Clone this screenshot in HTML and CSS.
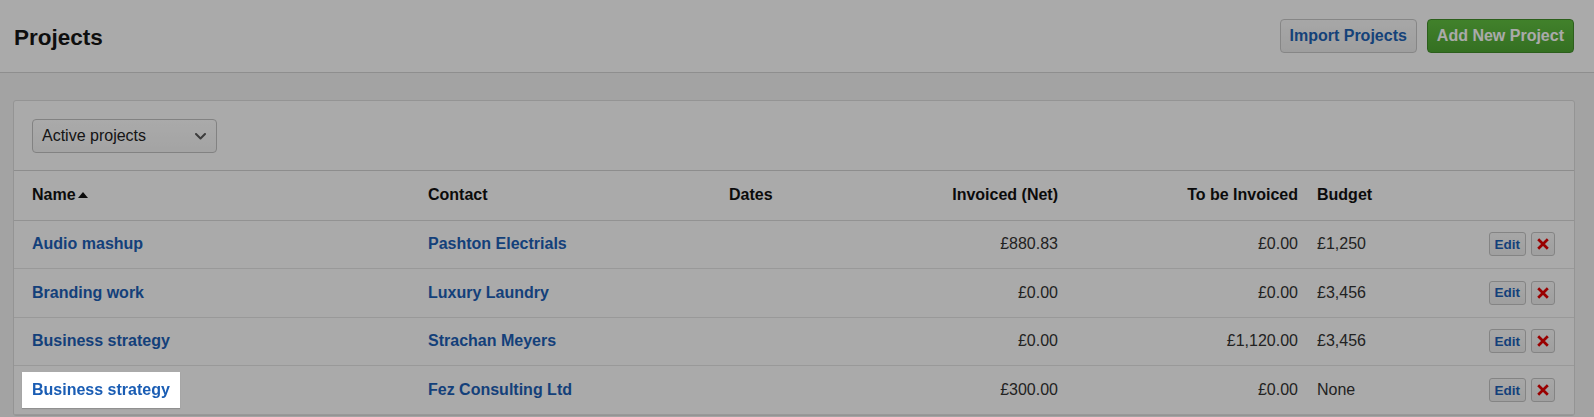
FILE: index.html
```html
<!DOCTYPE html>
<html lang="en">
<head>
<meta charset="utf-8">
<title>Projects</title>
<link rel="stylesheet" href="styles.css">
</head>
<body>
<header class="page-header">
  <h1 class="page-title">Projects</h1>
  <div class="header-actions">
    <a class="btn btn-default" href="#">Import Projects</a>
    <a class="btn btn-primary" href="#">Add New Project</a>
  </div>
</header>
<main class="main">
  <section class="card">
    <div class="filter-bar">
      <div class="select">
        <span>Active projects</span>
        <svg class="chevron" width="11" height="7" viewBox="0 0 11 7"><path d="M1 1 L5.5 5.5 L10 1" fill="none" stroke="#5a5a5a" stroke-width="2" stroke-linecap="round" stroke-linejoin="round"/></svg>
      </div>
    </div>
    <div class="grid">
      <div class="row head">
        <div class="c c-name">Name<svg class="sort" width="10" height="6" viewBox="0 0 10 6"><path d="M0 6 L5 0 L10 6 Z" fill="#111"/></svg></div>
        <div class="c c-contact">Contact</div>
        <div class="c c-dates">Dates</div>
        <div class="c c-inv">Invoiced (Net)</div>
        <div class="c c-tobe">To be Invoiced</div>
        <div class="c c-budget">Budget</div>
        <div class="c c-act"></div>
      </div>
      <div class="row">
        <div class="c c-name"><a href="#">Audio mashup</a></div>
        <div class="c c-contact"><a href="#">Pashton Electrials</a></div>
        <div class="c c-dates"></div>
        <div class="c c-inv">£880.83</div>
        <div class="c c-tobe">£0.00</div>
        <div class="c c-budget">£1,250</div>
        <div class="c c-act"><a class="sbtn" href="#">Edit</a><a class="sbtn del" href="#"><svg width="12" height="12" viewBox="0 0 12 12"><path d="M1.2 1.2 L10.8 10.8 M10.8 1.2 L1.2 10.8" stroke="#e60000" stroke-width="2.7"/></svg></a></div>
      </div>
      <div class="row">
        <div class="c c-name"><a href="#">Branding work</a></div>
        <div class="c c-contact"><a href="#">Luxury Laundry</a></div>
        <div class="c c-dates"></div>
        <div class="c c-inv">£0.00</div>
        <div class="c c-tobe">£0.00</div>
        <div class="c c-budget">£3,456</div>
        <div class="c c-act"><a class="sbtn" href="#">Edit</a><a class="sbtn del" href="#"><svg width="12" height="12" viewBox="0 0 12 12"><path d="M1.2 1.2 L10.8 10.8 M10.8 1.2 L1.2 10.8" stroke="#e60000" stroke-width="2.7"/></svg></a></div>
      </div>
      <div class="row">
        <div class="c c-name"><a href="#">Business strategy</a></div>
        <div class="c c-contact"><a href="#">Strachan Meyers</a></div>
        <div class="c c-dates"></div>
        <div class="c c-inv">£0.00</div>
        <div class="c c-tobe">£1,120.00</div>
        <div class="c c-budget">£3,456</div>
        <div class="c c-act"><a class="sbtn" href="#">Edit</a><a class="sbtn del" href="#"><svg width="12" height="12" viewBox="0 0 12 12"><path d="M1.2 1.2 L10.8 10.8 M10.8 1.2 L1.2 10.8" stroke="#e60000" stroke-width="2.7"/></svg></a></div>
      </div>
      <div class="row">
        <div class="c c-name"><a class="spotlight" href="#">Business strategy</a></div>
        <div class="c c-contact"><a href="#">Fez Consulting Ltd</a></div>
        <div class="c c-dates"></div>
        <div class="c c-inv">£300.00</div>
        <div class="c c-tobe">£0.00</div>
        <div class="c c-budget">None</div>
        <div class="c c-act"><a class="sbtn" href="#">Edit</a><a class="sbtn del" href="#"><svg width="12" height="12" viewBox="0 0 12 12"><path d="M1.2 1.2 L10.8 10.8 M10.8 1.2 L1.2 10.8" stroke="#e60000" stroke-width="2.7"/></svg></a></div>
      </div>
    </div>
  </section>
</main>
<div class="overlay"></div>
</body>
</html>
```

FILE: styles.css
```css
* { box-sizing: border-box; }

html, body {
  margin: 0;
  padding: 0;
}

body {
  background: #f5f5f5;
  font-family: "Liberation Sans", Arial, Helvetica, sans-serif;
  font-size: 16px;
  color: #333;
  overflow: hidden;
}

a { text-decoration: none; }

.page-header {
  height: 73px;
  background: #fff;
  border-bottom: 1px solid #d6d6d6;
  display: flex;
  align-items: center;
  justify-content: space-between;
  padding: 0 20px 0 14px;
}

.page-title {
  margin: 4px 0 0 0;
  font-size: 22.5px;
  font-weight: bold;
  color: #161616;
}

.header-actions {
  display: flex;
  gap: 10px;
  margin-top: 0;
}

.btn {
  display: inline-flex;
  align-items: center;
  height: 34px;
  padding: 0 9px;
  border-radius: 4px;
  font-size: 16px;
  font-weight: bold;
}

.btn-default {
  color: #1f63b6;
  background: linear-gradient(#fbfbfb, #eeeeee);
  border: 1px solid #cacaca;
}

.btn-primary {
  color: #fff;
  background: linear-gradient(#62c241, #4fa833);
  border: 1px solid #438f2b;
}

.main {
  padding: 27px 19px 0 13px;
}

.card {
  background: #fff;
  border: 1px solid #dedede;
  border-radius: 3px;
}

.filter-bar {
  padding: 17.5px 18px;
  border-bottom: 1px solid #d4d4d4;
}

.select {
  width: 185px;
  height: 34px;
  border: 1px solid #c4c4c4;
  border-radius: 4px;
  background: linear-gradient(#ffffff, #f6f6f6);
  display: flex;
  align-items: center;
  justify-content: space-between;
  padding: 0 10px 0 9px;
  color: #222;
  font-size: 16px;
}

.chevron { display: block; margin-top: 1px; }

.row {
  display: grid;
  grid-template-columns: 404px 301px 161px 188px 240px 112px 154px;
  align-items: center;
  height: 48.6px;
  border-bottom: 1px solid #e6e6e6;
}

.row.head {
  height: 49.5px;
  border-bottom: 1px solid #dcdcdc;
  font-weight: bold;
  color: #111;
}

.c {
  padding: 0 10px;
  white-space: nowrap;
}

.c-name { padding-left: 18px; display: flex; align-items: center; }
.c-inv, .c-tobe { text-align: right; }
.c-budget { padding-left: 9px; }
.c-act {
  padding-right: 19px;
  display: flex;
  justify-content: flex-end;
  gap: 5px;
}

.sort { margin-left: 2px; margin-top: -1px; }

.row a:not(.sbtn) {
  color: #1d61b8;
  font-weight: bold;
}

.sbtn {
  height: 24px;
  min-width: 24px;
  padding: 0 5px;
  border: 1px solid #c6c6c6;
  border-radius: 3px;
  background: linear-gradient(#fbfbfb, #efefef);
  color: #1d61b8;
  font-size: 13.5px;
  font-weight: bold;
  display: inline-flex;
  align-items: center;
  justify-content: center;
}

.sbtn.del { padding: 0; width: 24px; }

.overlay {
  position: fixed;
  inset: 0;
  background: rgba(0, 0, 0, 0.333);
  z-index: 10;
}

.row a.spotlight {
  position: relative;
  z-index: 11;
  display: inline-block;
  background: #fff;
  margin-left: -10px;
  padding: 0 10px 0 10px;
  line-height: 36px;
  color: #1a5db4;
  box-shadow: 0 1px 1px rgba(0, 0, 0, 0.15);
}
```
